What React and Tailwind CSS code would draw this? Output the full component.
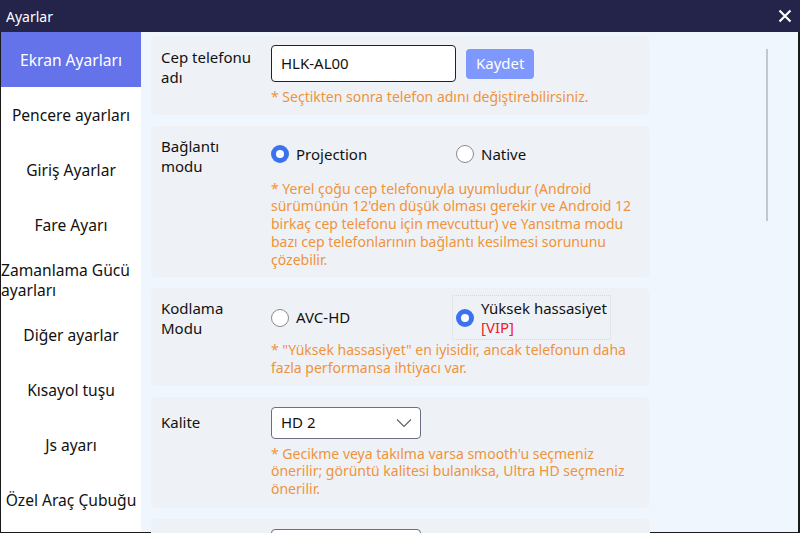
import { useState } from 'react';

const menu = [
  'Ekran Ayarları',
  'Pencere ayarları',
  'Giriş Ayarlar',
  'Fare Ayarı',
  'Zamanlama Gücü ayarları',
  'Diğer ayarlar',
  'Kısayol tuşu',
  'Js ayarı',
  'Özel Araç Çubuğu',
];

function Radio({ checked }) {
  return checked ? (
    <span className="w-[18px] h-[18px] rounded-full bg-[#3a72f0] flex items-center justify-center shrink-0">
      <span className="w-[8px] h-[8px] rounded-full bg-white" />
    </span>
  ) : (
    <span className="w-[18px] h-[18px] rounded-full border border-[#8a8a8a] bg-white shrink-0" />
  );
}

function Chevron() {
  return (
    <svg width="16" height="10" viewBox="0 0 16 10" fill="none" stroke="#666" strokeWidth="1.2">
      <path d="M1 1.5 L8 8.5 L15 1.5" />
    </svg>
  );
}

function Hint({ children, className = '' }) {
  return <p className={`text-[14px] leading-[17.7px] text-[#f0923a] ${className}`}>{children}</p>;
}

export default function App() {
  const [active] = useState(0);

  return (
    <div className="w-[800px] h-[533px] flex flex-col overflow-hidden font-['Noto_Sans',sans-serif] text-[#111]">
      {/* title bar */}
      <div className="h-[32px] bg-[#24244a] flex items-center justify-between pl-[6px] pr-[8px] shrink-0">
        <span className="text-white text-[14px]">Ayarlar</span>
        <svg width="14" height="14" viewBox="0 0 14 14" stroke="white" strokeWidth="2.2">
          <path d="M1.5 1.5 L12.5 12.5 M12.5 1.5 L1.5 12.5" />
        </svg>
      </div>

      <div className="flex flex-1 min-h-0 border-l border-r-2 border-b border-[#1a1a1a]">
        {/* sidebar */}
        <div className="w-[140px] bg-white shrink-0 flex flex-col">
          {menu.map((m, i) => (
            <div
              key={m}
              className={`h-[55px] flex items-center justify-center text-[15.6px] leading-[20px] shrink-0 ${
                i === active ? 'bg-[#6473e9] text-white' : ''
              }`}
            >
              <span>{m}</span>
            </div>
          ))}
        </div>

        {/* content */}
        <div className="flex-1 bg-[#eff6fe] pl-[10px] pt-[4px] flex min-h-0">
          <div className="w-[499px] flex flex-col gap-[11px]">
            {/* phone name */}
            <div className="bg-[#eef2f6] rounded-[5px] flex pl-[10px] pt-[9px] pb-[9px]">
              <div className="w-[110px] text-[15px] leading-[20px] pt-[2px]">Cep telefonu<br />adı</div>
              <div>
                <div className="flex items-center gap-[10px]">
                  <div className="w-[185px] h-[37px] border border-[#222] rounded-[4px] bg-white flex items-center px-[9px] text-[15px]">
                    HLK-AL00
                  </div>
                  <button className="h-[30px] px-[10px] rounded-[4px] bg-[#7e98fe] text-white text-[15px]">Kaydet</button>
                </div>
                <Hint className="mt-[6px]">* Seçtikten sonra telefon adını değiştirebilirsiniz.</Hint>
              </div>
            </div>

            {/* connection mode */}
            <div className="bg-[#eef2f6] rounded-[5px] flex pl-[10px] pt-[10px] pb-[9px]">
              <div className="w-[110px] text-[15px] leading-[20px]">Bağlantı<br />modu</div>
              <div className="w-[370px]">
                <div className="h-[37px] flex items-center text-[15px]">
                  <div className="w-[185px] flex items-center gap-[7px]">
                    <Radio checked />
                    <span>Projection</span>
                  </div>
                  <div className="flex items-center gap-[7px]">
                    <Radio />
                    <span>Native</span>
                  </div>
                </div>
                <Hint className="mt-[7px]">
                  * Yerel çoğu cep telefonuyla uyumludur (Android sürümünün 12'den düşük olması gerekir ve Android 12 birkaç cep telefonu için mevcuttur) ve Yansıtma modu bazı cep telefonlarının bağlantı kesilmesi sorununu çözebilir.
                </Hint>
              </div>
            </div>

            {/* encoding mode */}
            <div className="bg-[#eef2f6] rounded-[5px] flex pl-[10px] pt-[7px] pb-[9px]">
              <div className="w-[110px] text-[15px] leading-[20px] pt-[3px]">Kodlama<br />Modu</div>
              <div className="w-[370px]">
                <div className="h-[45px] flex items-center text-[15px]">
                  <div className="w-[181px] flex items-center gap-[7px]">
                    <Radio />
                    <span>AVC-HD</span>
                  </div>
                  <div className="h-[45px] flex items-center gap-[7px] pl-[3px] pr-[3px] border border-dotted border-[#d6d9de]">
                    <Radio checked />
                    <span className="leading-[19px]">
                      Yüksek hassasiyet<br />
                      <span className="text-[#f0202a]">[VIP]</span>
                    </span>
                  </div>
                </div>
                <Hint className="mt-[1px]">
                  * "Yüksek hassasiyet" en iyisidir, ancak telefonun daha fazla performansa ihtiyacı var.
                </Hint>
              </div>
            </div>

            {/* quality */}
            <div className="bg-[#eef2f6] rounded-[5px] flex pl-[10px] pt-[10px] pb-[10px]">
              <div className="w-[110px] text-[15px] h-[32px] flex items-center">Kalite</div>
              <div className="w-[370px]">
                <div className="w-[150px] h-[32px] border border-[#6b6e80] rounded-[4px] bg-white flex items-center justify-between pl-[9px] pr-[8px] text-[15px]">
                  <span>HD 2</span>
                  <Chevron />
                </div>
                <Hint className="mt-[6px]">
                  * Gecikme veya takılma varsa smooth'u seçmeniz önerilir; görüntü kalitesi bulanıksa, Ultra HD seçmeniz önerilir.
                </Hint>
              </div>
            </div>

            {/* next card (cut off) */}
            <div className="bg-[#eef2f6] rounded-[5px] flex pl-[10px] pt-[10px] pb-[9px] h-[60px] shrink-0">
              <div className="w-[110px]" />
              <div className="w-[150px] h-[32px] border border-[#6b6e80] rounded-[4px] bg-white" />
            </div>
          </div>

          {/* scrollbar */}
          <div className="ml-[116px] mt-[13px] w-[2px] h-[172px] bg-[#c4c7cb]" />
        </div>
      </div>
    </div>
  );
}
